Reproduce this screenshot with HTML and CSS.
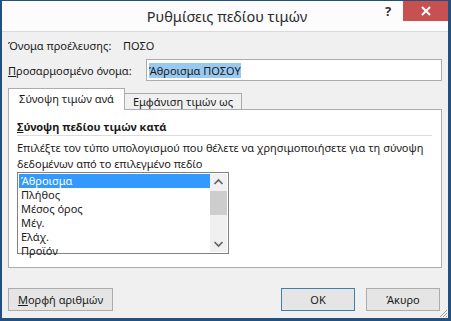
FILE: index.html
```html
<!DOCTYPE html>
<html lang="el">
<head>
    <meta charset="UTF-8">
    <title>Ρυθμίσεις πεδίου τιμών</title>
    <link rel="stylesheet" href="styles.css">
</head>
<body>

<div class="window">
    <div class="titlebar">
        <span class="title">Ρυθμίσεις πεδίου τιμών</span>
        <span class="help">?</span>
        <span class="close">
            <svg width="12" height="10" viewBox="0 0 12 10">
                <path d="M2 1 L10 9 M10 1 L2 9" stroke="#fff" stroke-width="2"/>
            </svg>
        </span>
    </div>

    <div class="content">
        <div class="row">
            <span class="label">Όνομα προέλευσης:</span>
            <span class="source">ΠΟΣΟ</span>
        </div>
        <div class="row row-name">
            <span class="label"><u>Π</u>ροσαρμοσμένο όνομα:</span>
            <div class="input-field"><span class="selected-text">Άθροισμα ΠΟΣΟΥ</span></div>
        </div>

        <div class="tabs">
            <div class="tab active">Σύνοψη τιμών ανά</div>
            <div class="tab">Εμφάνιση τιμών ως</div>
        </div>
        <div class="panel">
            <div class="group-title"><u>Σ</u>ύνοψη πεδίου τιμών κατά</div>
            <p class="description">Επιλέξτε τον τύπο υπολογισμού που θέλετε να χρησιμοποιήσετε για τη σύνοψη δεδομένων από το επιλεγμένο πεδίο</p>
            <div class="listbox">
                <ul class="items">
                    <li class="current">Άθροισμα</li>
                    <li>Πλήθος</li>
                    <li>Μέσος όρος</li>
                    <li>Μέγ.</li>
                    <li>Ελάχ.</li>
                    <li>Προϊόν</li>
                </ul>
                <div class="scrollbar">
                    <svg width="17" height="17" viewBox="0 0 17 17"><path d="M4.5 10 L8.5 6 L12.5 10" fill="none" stroke="#606060" stroke-width="1.6"/></svg>
                    <div class="thumb"></div>
                    <div class="track"></div>
                    <svg width="17" height="17" viewBox="0 0 17 17"><path d="M4.5 7 L8.5 11 L12.5 7" fill="none" stroke="#606060" stroke-width="1.6"/></svg>
                </div>
            </div>
        </div>

        <div class="footer">
            <button class="btn btn-wide"><u>Μ</u>ορφή αριθμών</button>
            <div class="footer-right">
                <button class="btn btn-default">OK</button>
                <button class="btn">Άκυρο</button>
            </div>
        </div>
        <svg class="grip" width="10" height="10" viewBox="0 0 10 10">
            <path d="M9 2 L2 9 M9 5 L5 9 M9 8 L8 9" stroke="#a0a0a0" stroke-width="1"/>
        </svg>
    </div>
</div>

</body>
</html>
```

FILE: styles.css
```css
body {
    margin: 0;
    font-family: "Noto Sans", "Open Sans", sans-serif;
    font-size: 11px;
    color: #1a1a1a;
}

.window {
    width: 451px;
    height: 321px;
    box-sizing: border-box;
    border: 1px solid #24507f;
    border-width: 1px 3px 3px 2px;
    display: flex;
    flex-direction: column;
    background-color: #f0f0f0;
}

.titlebar {
    height: 30px;
    background-color: #fcfcfc;
    border-bottom: 1px solid #d9d9d9;
    display: flex;
    align-items: center;
    position: relative;
}

.title {
    flex: 1;
    text-align: center;
    font-size: 14.5px;
    color: #2b2b2b;
    padding-left: 4px;
}

.help {
    position: absolute;
    left: 383px;
    top: 1px;
    font-size: 13px;
    font-weight: bold;
    color: #333;
}

.close {
    position: absolute;
    right: 0;
    top: 0;
    width: 45px;
    height: 20px;
    background-color: #c75050;
    display: flex;
    align-items: center;
    justify-content: center;
}

.content {
    flex: 1;
    padding: 4px 6px 0 6px;
    position: relative;
}

.row {
    display: flex;
    align-items: center;
    height: 18px;
}

.row .label {
    width: 115px;
}

.row-name {
    margin-top: 5px;
    height: 22px;
}

.row-name .label {
    width: 138px;
}

.input-field {
    flex: 1;
    height: 22px;
    box-sizing: border-box;
    background-color: #fff;
    border: 1px solid #acacac;
    display: flex;
    align-items: center;
    padding-left: 2px;
}

.selected-text {
    background-color: #99c9ef;
    line-height: 15px;
}

.tabs {
    display: flex;
    align-items: flex-end;
    margin-top: 7px;
    height: 22px;
    margin-bottom: -1px;
    position: relative;
    z-index: 1;
}

.tab {
    width: 117px;
    box-sizing: border-box;
    border: 1px solid #acacac;
    border-bottom: none;
    background-color: #f0f0f0;
    height: 16px;
    line-height: 15px;
    text-align: center;
    margin-bottom: 1px;
}

.tab.active {
    background-color: #fff;
    height: 22px;
    line-height: 20px;
    margin-bottom: 0;
}

.tab + .tab {
    border-left: none;
}

.panel {
    height: 159px;
    background-color: #fff;
    border: 1px solid #acacac;
    padding: 8px 9px 0 8px;
    box-sizing: border-box;
}

.group-title {
    font-weight: bold;
    line-height: 17px;
    border-bottom: 1px solid #dcdcdc;
}

.description {
    margin: 4px 0 0 0;
    line-height: 16px;
}

.listbox {
    width: 212px;
    height: 82px;
    box-sizing: border-box;
    border: 1px solid #828282;
    display: flex;
    padding: 1px;
}

.items {
    list-style: none;
    margin: 0;
    padding: 0;
    flex: 1;
}

.items li {
    height: 14px;
    line-height: 13px;
    padding-left: 2px;
}

.items li.current {
    background-color: #3399ff;
    color: #fff;
}

.scrollbar {
    width: 17px;
    background-color: #f0f0f0;
    display: flex;
    flex-direction: column;
}

.thumb {
    height: 24px;
    background-color: #cdcdcd;
}

.track {
    flex: 1;
}

.footer {
    display: flex;
    justify-content: space-between;
    margin-top: 20px;
}

.footer-right {
    display: flex;
    gap: 11px;
    margin-right: 2px;
}

.btn {
    font-family: inherit;
    font-size: 11px;
    color: #1a1a1a;
    height: 23px;
    width: 74px;
    border: 1px solid #acacac;
    background-color: #e5e5e5;
    padding: 0;
}

.btn-wide {
    width: 105px;
}

.btn-default {
    border-color: #3c7fb1;
}

.grip {
    position: absolute;
    right: 0;
    bottom: 0;
}
```
